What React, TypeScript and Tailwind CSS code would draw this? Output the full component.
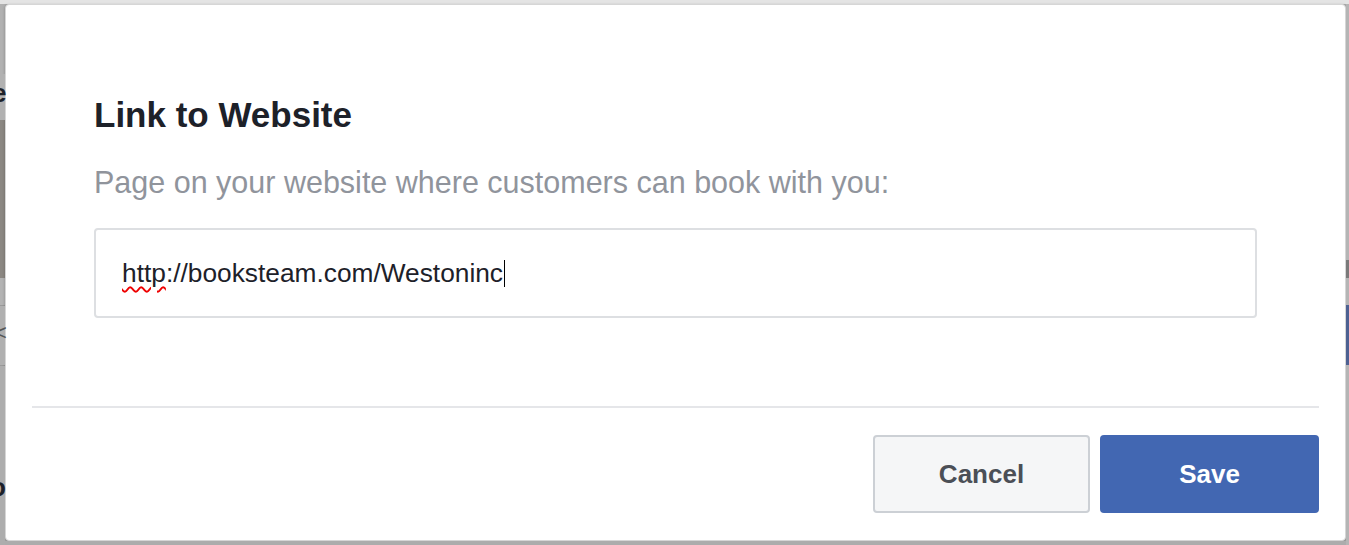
export default function App() {
  return (
    <div className="flex h-[545px] w-full overflow-hidden bg-[#acacac] font-['Liberation_Sans',Arial,sans-serif]">
      {/* page peeking out behind the dialog, left side */}
      <div className="flex w-[5px] flex-col">
        <div className="h-[4px] bg-[#e4e4e4]" />
        <div className="h-[70px] bg-[#b1b1b1]" />
        <div className="relative h-[46px] bg-[#b1b1b1]">
          <span className="absolute -left-[8px] top-[6px] text-[26px] font-bold leading-none text-[#1d2129]">e</span>
        </div>
        <div className="h-[158px] bg-[#8b8782]" />
        <div className="h-[27px] bg-[#b3b3b3]" />
        <div className="h-px bg-[#9a9a9a]" />
        <div className="relative h-[59px] bg-[#b0b0b0]">
          <span className="absolute -left-[6px] top-[16px] text-[22px] leading-none text-[#555]">&lt;</span>
        </div>
        <div className="h-px bg-[#9a9a9a]" />
        <div className="relative flex-1 bg-[#adadad]">
          <span className="absolute -left-[10px] top-[108px] text-[26px] font-bold leading-none text-[#1d2129]">o</span>
        </div>
      </div>

      <div className="flex flex-1 flex-col">
        <div className="h-[4px] bg-[#e4e4e4]" />
        <div className="flex flex-1 flex-col rounded-[4px] border border-[#d6d6d6] bg-white shadow-[0_1px_3px_rgba(0,0,0,0.25)]">
          <div className="px-[88px] pt-[90px]">
            <h1 className="text-[35px] font-bold leading-[40px] text-[#1d2129]">Link to Website</h1>
            <p className="mt-[29px] text-[30.5px] leading-[36px] text-[#90949c]">
              Page on your website where customers can book with you:
            </p>
            <div className="mt-[28px] flex h-[90px] items-center rounded-[4px] border-2 border-[#dddfe2] px-[26px] text-[26.3px] leading-[30px] text-[#1d2129]">
              <span className="[text-decoration-color:#e00] [text-decoration-line:underline] [text-decoration-style:wavy] [text-decoration-thickness:1.5px] [text-underline-offset:4px]">
                http
              </span>
              <span>://booksteam.com/Westoninc</span>
              <span className="ml-px inline-block h-[27px] w-px bg-black" />
            </div>
          </div>

          <div className="mx-[26px] mt-[88px] h-[2px] bg-[#e5e6e9]" />

          <div className="flex justify-end gap-[10px] px-[26px] pt-[27px]">
            <button className="flex h-[78px] w-[217px] items-center justify-center rounded-[4px] border-2 border-[#ccd0d5] bg-[#f5f6f7] text-[26px] font-bold text-[#4b4f56]">
              Cancel
            </button>
            <button className="flex h-[78px] w-[219px] items-center justify-center rounded-[4px] bg-[#4267b2] text-[26px] font-bold text-white">
              Save
            </button>
          </div>
        </div>
        <div className="h-[4px] bg-[#acacac]" />
      </div>

      {/* page peeking out, right side */}
      <div className="flex w-[3px] flex-col">
        <div className="h-[4px] bg-[#e4e4e4]" />
        <div className="h-[256px] bg-[#b5b5b5]" />
        <div className="h-[18px] bg-[#7a7a7a]" />
        <div className="h-[27px] bg-[#b5b5b5]" />
        <div className="h-[60px] bg-[#4d6192]" />
        <div className="flex-1 bg-[#b5b5b5]" />
      </div>
    </div>
  );
}
